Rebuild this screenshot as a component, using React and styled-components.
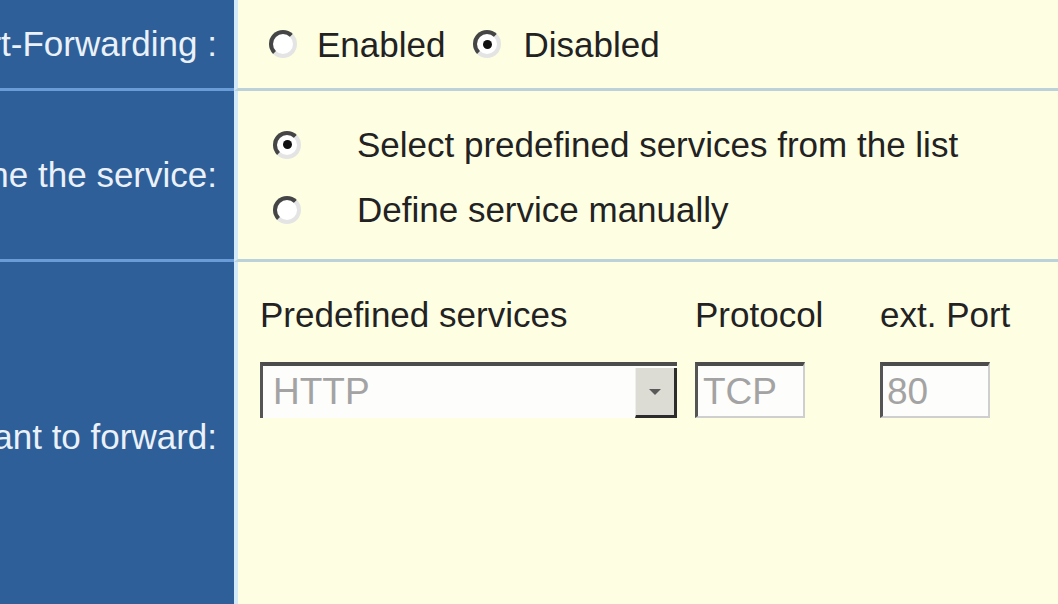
import React from "react";
import styled, { createGlobalStyle } from "styled-components";

const GlobalStyle = createGlobalStyle`
  html, body {
    margin: 0;
    padding: 0;
    background: #fefee3;
    overflow: hidden;
  }
  body {
    font-family: "Liberation Sans", Arial, sans-serif;
  }
`;

const Page = styled.div`
  width: 1058px;
  height: 604px;
  overflow: hidden;
  background: #fefee3;
  color: #222;
  font-size: 35px;
`;

const Row = styled.div`
  display: grid;
  grid-template-columns: 234px 1fr;
  height: ${(p) => p.$h}px;
`;

const Label = styled.div`
  background: #2e5f99;
  color: #eaf1f8;
  display: flex;
  justify-content: flex-end;
  align-items: center;
  padding-right: 17px;
  overflow: hidden;
  white-space: nowrap;
  border-bottom: ${(p) => (p.$last ? "none" : "3px solid #6a9dd8")};
`;

const Cell = styled.div`
  border-left: 4px solid #d3eafa;
  border-bottom: ${(p) => (p.$last ? "none" : "3px solid #bcd2da")};
  white-space: nowrap;
`;

const ToggleCell = styled(Cell)`
  display: flex;
  align-items: center;
  padding-left: 31px;
`;

const Choice = styled.div`
  display: flex;
  align-items: center;
  gap: ${(p) => p.$gap}px;
  margin-right: ${(p) => p.$after || 0}px;
  line-height: 37px;
`;

const ChoiceList = styled(Cell)`
  display: grid;
  grid-template-columns: 28px auto;
  column-gap: 56px;
  row-gap: 28px;
  align-items: center;
  align-content: start;
  padding: 35px 0 0 35px;
  line-height: 37px;
`;

const Radio = styled.span`
  box-sizing: border-box;
  width: 28px;
  height: 28px;
  border-radius: 50%;
  border: 4px solid;
  border-color: #454545 #e4e4e4 #e4e4e4 #454545;
  background: #fff;
  display: inline-flex;
  align-items: center;
  justify-content: center;
  flex-shrink: 0;

  &::after {
    content: "";
    width: 9px;
    height: 9px;
    border-radius: 50%;
    background: ${(p) => (p.$on ? "#111" : "transparent")};
  }
`;

const ServiceGrid = styled(Cell)`
  display: grid;
  grid-template-columns: 435px 185px auto;
  row-gap: 29px;
  align-content: start;
  padding: 34px 0 0 22px;
  line-height: 37px;
`;

const FieldBox = styled.div`
  box-sizing: border-box;
  width: ${(p) => p.$w}px;
  height: 56px;
  display: flex;
  align-items: center;
  background: #fdfdfb;
  border-top: 4px solid #4c4c4c;
  border-left: 3px solid #555;
  border-right: 2px solid #cfcfcf;
  border-bottom: 2px solid #cfcfcf;
  color: #a3a3a3;
  font-size: 37px;
  padding-left: ${(p) => p.$pad}px;
`;

const SelectBox = styled(FieldBox)`
  border-right: none;
  border-bottom: none;
  padding-right: 0;
`;

const SelectText = styled.span`
  flex: 1;
  padding-bottom: 2px;
`;

const DropButton = styled.span`
  box-sizing: border-box;
  width: 42px;
  align-self: stretch;
  margin-top: 2px;
  background: #dcdcd4;
  border-right: 3px solid #2c2c2c;
  border-bottom: 3px solid #2c2c2c;
  border-left: 1px solid #efefe9;
  display: flex;
  align-items: center;
  justify-content: center;

  &::after {
    content: "";
    border-left: 6px solid transparent;
    border-right: 6px solid transparent;
    border-top: 6px solid #5a5a5a;
  }
`;

export default function App() {
  return (
    <>
      <GlobalStyle />
      <Page>
        <Row $h={91}>
          <Label>Port-Forwarding :</Label>
          <ToggleCell>
            <Choice $gap={20} $after={28}>
              <Radio />
              <span>Enabled</span>
            </Choice>
            <Choice $gap={22}>
              <Radio $on />
              <span>Disabled</span>
            </Choice>
          </ToggleCell>
        </Row>

        <Row $h={171}>
          <Label>Define the service:</Label>
          <ChoiceList>
            <Radio $on />
            <span>Select predefined services from the list</span>
            <Radio />
            <span>Define service manually</span>
          </ChoiceList>
        </Row>

        <Row $h={350}>
          <Label $last>Service you want to forward:</Label>
          <ServiceGrid $last>
            <span>Predefined services</span>
            <span>Protocol</span>
            <span>ext. Port</span>
            <SelectBox $w={417} $pad={10}>
              <SelectText>HTTP</SelectText>
              <DropButton />
            </SelectBox>
            <FieldBox $w={110} $pad={5}>
              TCP
            </FieldBox>
            <FieldBox $w={110} $pad={4}>
              80
            </FieldBox>
          </ServiceGrid>
        </Row>
      </Page>
    </>
  );
}
